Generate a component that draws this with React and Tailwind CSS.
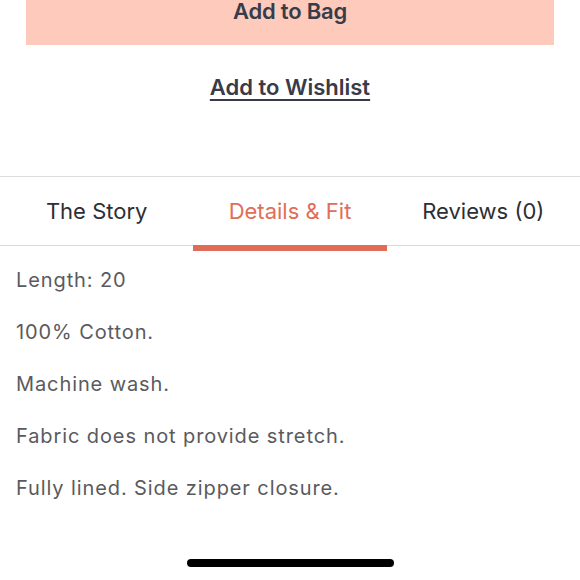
export default function App() {
  const font = { fontFamily: "Inter, 'Liberation Sans', sans-serif" };
  return (
    <div className="w-[580px] h-[580px] overflow-hidden bg-white relative" style={font}>
      <div className="px-[26px]">
        <div className="mt-[-22px] h-[67px] bg-[#fdcabc] flex items-center justify-center">
          <span className="text-[22px] font-semibold text-[#383b48] tracking-[-0.2px]">Add to Bag</span>
        </div>
      </div>
      <div className="mt-[27px] h-[30px] flex items-center justify-center">
        <span className="text-[22px] font-semibold text-[#383b48] underline decoration-[2px] underline-offset-[4px] tracking-[0px]">Add to Wishlist</span>
      </div>
      <div className="mt-[74px] border-t border-b border-[#dcdcdc] h-[70px] grid grid-cols-3">
        <div className="flex items-center justify-center text-[22px] text-[#2e2e33]">The Story</div>
        <div className="relative flex items-center justify-center text-[22px] text-[#df6e58]">
          Details &amp; Fit
          <div className="absolute left-0 right-0 bottom-[-6px] h-[6px] bg-[#e06c57]"></div>
        </div>
        <div className="flex items-center justify-center text-[22px] text-[#2e2e33]">Reviews (0)</div>
      </div>
      <div className="pl-4 pt-[22px] flex flex-col gap-[28px] text-[20px] leading-[24px] tracking-[0.9px] text-[#5a5a5e]">
        <div>Length: 20</div>
        <div>100% Cotton.</div>
        <div>Machine wash.</div>
        <div>Fabric does not provide stretch.</div>
        <div>Fully lined. Side zipper closure.</div>
      </div>
      <div className="absolute left-[187px] top-[559px] w-[207px] h-[8px] rounded-full bg-black"></div>
    </div>
  );
}
